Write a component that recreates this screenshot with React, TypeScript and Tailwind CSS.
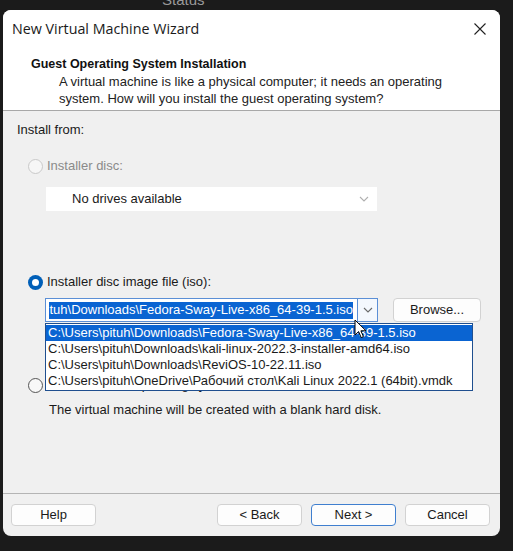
import React from "react";

const paths = [
  "C:\\Users\\pituh\\Downloads\\Fedora-Sway-Live-x86_64-39-1.5.iso",
  "C:\\Users\\pituh\\Downloads\\kali-linux-2022.3-installer-amd64.iso",
  "C:\\Users\\pituh\\Downloads\\ReviOS-10-22.11.iso",
  "C:\\Users\\pituh\\OneDrive\\Рабочий стол\\Kali Linux 2022.1 (64bit).vmdk",
];

function Chevron({ color }: { color: string }) {
  return (
    <svg width="10" height="6" viewBox="0 0 10 6" fill="none">
      <path d="M1 1l4 4 4-4" stroke={color} strokeWidth="1.1" />
    </svg>
  );
}

function Button({ label, primary, wide }: { label: string; primary?: boolean; wide?: boolean }) {
  return (
    <div
      className={`flex items-center justify-center rounded-[4px] border bg-[#fdfdfd] text-[13px] text-[#1a1a1a] ${
        wide ? "h-[24px] w-[88px]" : "h-[22px] w-[85px]"
      } ${primary ? "border-[#3f7fcf]" : "border-[#d2d2d2]"}`}
    >
      {label}
    </div>
  );
}

export default function App() {
  return (
    <div
      className="relative h-[551px] w-[513px] overflow-hidden bg-[#1b1b1b]"
      style={{ fontFamily: '"Liberation Sans", Arial, sans-serif' }}
    >
      {/* bit of the window behind */}
      <div className="flex h-[10px] overflow-hidden">
        <span className="ml-[162px] -mt-[9px] text-[15px] leading-[18px] text-[#9a9a9a]">Status</span>
      </div>

      {/* dialog */}
      <div className="ml-[3px] flex h-[526px] w-[497px] flex-col overflow-hidden rounded-[8px] bg-[#f0f0f0]">
        {/* title + header */}
        <div className="flex h-[100px] flex-col bg-white">
          <div className="flex h-[38px] items-center justify-between pl-[9px] pr-[14px]">
            <span
              className="text-[#1a1a1a]"
              style={{ fontFamily: '"Open Sans", "Liberation Sans", sans-serif', fontSize: "14.3px" }}
            >
              New Virtual Machine Wizard
            </span>
            <svg width="12" height="12" viewBox="0 0 12 12">
              <path d="M0.5 0.5l11 11M11.5 0.5l-11 11" stroke="#222" strokeWidth="1.1" />
            </svg>
          </div>
          <div className="pl-[28px] pt-[9px] text-[12.5px] font-bold leading-[15px] text-[#111]">
            Guest Operating System Installation
          </div>
          <div className="pl-[56px] pt-[1px] text-[13px] leading-[17px] text-[#222]">
            A virtual machine is like a physical computer; it needs an operating
            <br />
            system. How will you install the guest operating system?
          </div>
        </div>
        <div className="h-px bg-[#a8a8a8]" />

        {/* body */}
        <div className="relative flex flex-1 flex-col pl-[14px] pt-[11px] text-[13px] text-[#1a1a1a]">
          <div className="leading-[16px]">Install from:</div>

          <div className="mt-[20px] flex items-center gap-[4px] pl-[11px]">
            <span className="h-[15px] w-[15px] rounded-full border border-[#c9c9c9] bg-[#f6f6f6]" />
            <span className="leading-[16px] text-[#8a8a8a]">Installer disc:</span>
          </div>

          <div className="ml-[29px] mt-[13px] flex h-[24px] w-[331px] items-center justify-between bg-white pl-[26px] pr-[8px]">
            <span className="text-[#1a1a1a]">No drives available</span>
            <Chevron color="#b0b0b0" />
          </div>

          <div className="mt-[63px] flex items-center gap-[4px] pl-[11px]">
            <span className="flex h-[15px] w-[15px] items-center justify-center rounded-full bg-[#005fb8]">
              <span className="h-[7px] w-[7px] rounded-full bg-white" />
            </span>
            <span className="leading-[16px]">Installer disc image file (iso):</span>
          </div>

          <div className="ml-[28px] mt-[8px] flex items-center gap-[15px]">
            <div className="flex h-[24px] w-[333px] items-center border border-[#5b8fd6] bg-white pl-[3px]">
              <span className="flex h-[17px] w-[304px] items-center justify-end overflow-hidden whitespace-nowrap bg-[#0a64d2] text-white">
                <span className="shrink-0">pituh\Downloads\Fedora-Sway-Live-x86_64-39-1.5.iso</span>
              </span>
              <span className="ml-auto flex h-full w-[20px] items-center justify-center border-l border-[#5b8fd6] bg-[#f4f8fd]">
                <Chevron color="#6a6a6a" />
              </span>
            </div>
            <Button label="Browse..." wide />
          </div>

          <div className="mt-[55px] flex items-center gap-[4px] pl-[11px]">
            <span className="h-[15px] w-[15px] rounded-full border border-[#555] bg-[#f8f8f8]" />
            <span className="leading-[16px]">I will install the operating system later.</span>
          </div>

          <div className="mt-[9px] pl-[32px] leading-[16px]">
            The virtual machine will be created with a blank hard disk.
          </div>

          {/* dropdown list */}
          <div className="absolute left-[42px] top-[212px] w-[428px] border border-[#1f4f8f] bg-white py-[1px]">
            {paths.map((p, i) => (
              <div
                key={p}
                className={`h-[16px] whitespace-nowrap pl-[2px] leading-[16px] ${
                  i === 0 ? "bg-[#0a64d2] text-white" : "text-[#1a1a1a]"
                }`}
              >
                {p}
              </div>
            ))}
          </div>

          {/* mouse pointer */}
          <svg className="absolute left-[351px] top-[208px]" width="13" height="20" viewBox="0 0 13 20">
            <path d="M1 1v15l3.6-3.4 2.6 6 2.2-1-2.5-5.8H12z" fill="#fff" stroke="#000" strokeWidth="1" strokeLinejoin="round" />
          </svg>
        </div>

        <div className="h-px bg-[#b4b4b4]" />
        {/* footer */}
        <div className="flex h-[42px] items-center pl-[8px] pr-[10px]">
          <Button label="Help" />
          <div className="ml-auto flex gap-[9px]">
            <Button label="< Back" />
            <Button label="Next >" primary />
            <Button label="Cancel" />
          </div>
        </div>
      </div>
    </div>
  );
}
